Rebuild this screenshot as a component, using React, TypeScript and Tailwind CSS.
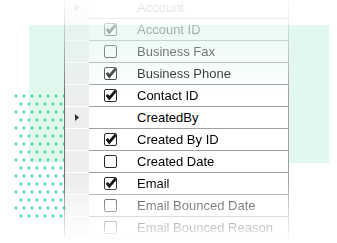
import * as React from "react"

type Row = { label: string; checked?: boolean; group?: boolean }

const rows: Row[] = [
  { label: "Account", group: true },
  { label: "Account ID", checked: true },
  { label: "Business Fax", checked: false },
  { label: "Business Phone", checked: true },
  { label: "Contact ID", checked: true },
  { label: "CreatedBy", group: true },
  { label: "Created By ID", checked: true },
  { label: "Created Date", checked: false },
  { label: "Email", checked: true },
  { label: "Email Bounced Date", checked: false },
  { label: "Email Bounced Reason", checked: false },
]

function Checkbox({ checked }: { checked: boolean }) {
  return (
    <svg className="h-[13px] w-[13px] shrink-0 overflow-visible" viewBox="0 0 13 13">
      <rect
        x="0.5"
        y="0.5"
        width="12"
        height="12"
        rx="1.5"
        fill="#fff"
        stroke="#2a2a2a"
        strokeWidth={1}
      />
      {checked && (
        <polyline
          points="2.8,5.9 5.3,9.2 11.8,1.6"
          fill="none"
          stroke="#111"
          strokeWidth={2.8}
          strokeLinejoin="miter"
        />
      )}
    </svg>
  )
}

function Dots() {
  const dots: { x: number; y: number }[] = []
  for (let k = 0; k < 16; k++) {
    const y = 96 + k * 8
    const even = k % 2 === 0
    const count = even ? 7 : 6
    for (let j = 0; j < count; j++) {
      dots.push({ x: (even ? 16 : 21) + j * 8, y })
    }
  }
  return (
    <svg className="absolute left-0 top-0 h-[243px] w-[70px]" viewBox="0 0 70 243">
      {dots.map((d, i) => (
        <circle key={i} cx={d.x} cy={d.y} r={1.4} fill="#3ddc9f" />
      ))}
    </svg>
  )
}

export default function App() {
  return (
    <div className="relative h-[243px] w-[337px] overflow-hidden bg-white font-['Liberation_Sans',Arial,sans-serif]">
      <div className="absolute left-[29px] top-[25px] h-[138px] w-[300px] bg-[#e2f8ef]" />
      <Dots />

      <div className="absolute left-[64px] top-[-3px] w-[225px] border-l border-r border-l-[#707070] border-r-[#a0a0a0] [mask-image:linear-gradient(to_bottom,rgba(0,0,0,0.05)_0px,rgba(0,0,0,0.12)_15px,rgba(0,0,0,0.3)_34px,rgba(0,0,0,0.52)_55px,rgba(0,0,0,0.75)_77px,rgba(0,0,0,1)_99px,rgba(0,0,0,1)_185px,rgba(0,0,0,0.5)_209px,rgba(0,0,0,0.22)_231px,rgba(0,0,0,0)_244px)]">
        {rows.map((r) => (
          <div key={r.label} className="flex h-[22px]">
            <div className="flex w-[24px] shrink-0 items-center border-b border-white bg-[#eceeee] pl-[10px]">
              {r.group && (
                <svg className="h-[7px] w-[4px]" viewBox="0 0 4 7">
                  <polygon points="0,0 4,3.5 0,7" fill="#333" />
                </svg>
              )}
            </div>
            <div className="flex flex-1 items-center border-b border-[#a0a0a0] bg-white text-[13px] text-black">
              <div className="w-[48px] shrink-0 pl-[15px]">
                {!r.group && <Checkbox checked={!!r.checked} />}
              </div>
              <span className="whitespace-nowrap leading-none">{r.label}</span>
            </div>
          </div>
        ))}
      </div>
    </div>
  )
}
